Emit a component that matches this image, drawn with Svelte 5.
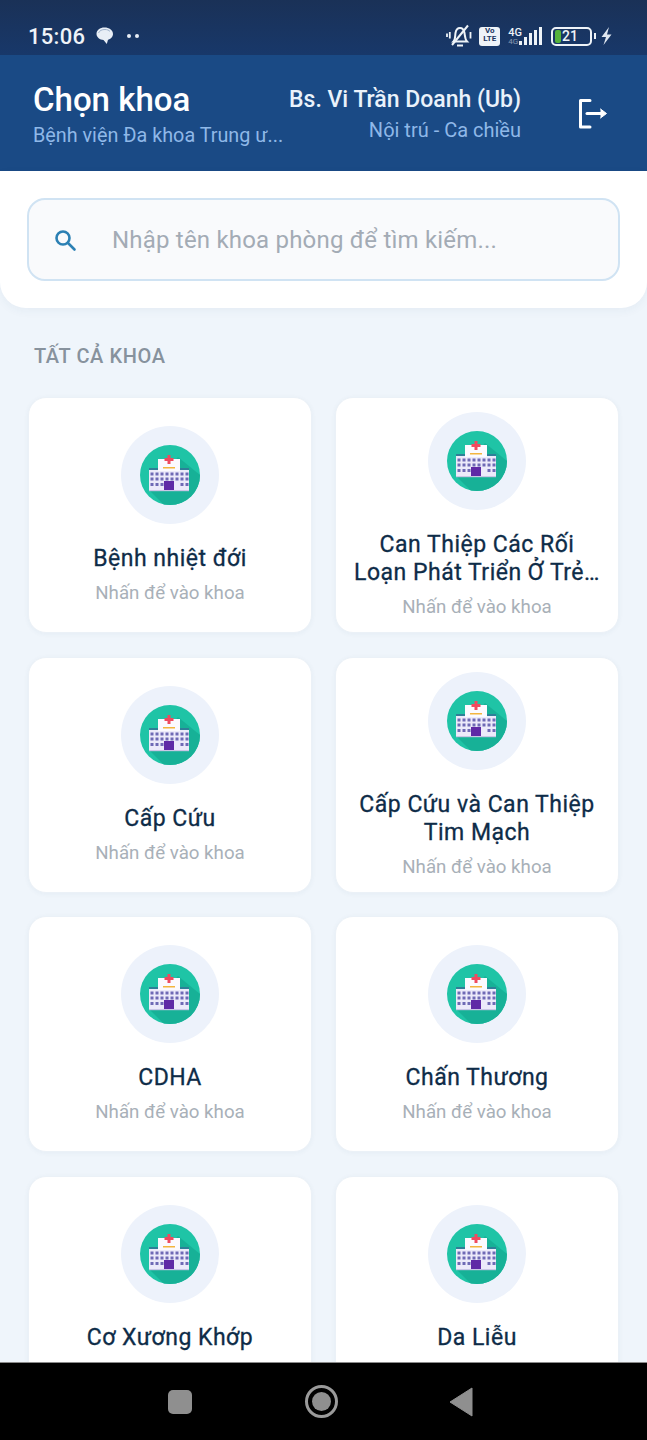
<script>
  const departments = [
    { name: "Bệnh nhiệt đới" },
    { name: "Can Thiệp Các Rối Loạn Phát Triển Ở Trẻ…" },
    { name: "Cấp Cứu" },
    { name: "Cấp Cứu và Can Thiệp Tim Mạch" },
    { name: "CDHA" },
    { name: "Chấn Thương" },
    { name: "Cơ Xương Khớp" },
    { name: "Da Liễu" }
  ];
  const columns = [10.500, 15.500, 20.500, 25.500, 30.500, 35.500, 40.500, 45.500];
  const rows = [27.500, 32.500, 38];
  // the door takes the middle of the lowest row
  const hasWindow = (x, y) => !(y === 38 && x > 22 && x < 36);
</script>

<div class="screen">
  <div class="status">
    <span class="time">15:06</span>
    <svg class="chat" width="20" height="20" viewBox="0 0 20 20">
      <path d="M9.500 1.500C14 1.500 18 4 18 8C18 11 15.500 13.200 13 13.800L11.800 18L8.500 14C5 13.700 1.500 11.500 1.500 8C1.500 4 5 1.500 9.500 1.500Z" fill="#e8eef6" />
      <path d="M3.500 7C4.500 4.500 7 3.500 10 3.500C12 3.500 14 4.200 15 5.500" fill="none" stroke="#9fb2cb" stroke-width="1" />
    </svg>
    <span class="dots"><i></i><i></i></span>
    <span class="spacer"></span>
    <svg class="bell" width="28" height="24" viewBox="0 0 28 24" fill="none" stroke="#eef3f8" stroke-width="2">
      <path d="M7.500 17.500C9.500 15.500 9 12 9.500 9C10 6 12 4 14 4C16 4 18 6 18.500 9C19 12 19 15.500 21 17.500Z" />
      <path d="M11 21.500H17" />
      <path d="M6 21L22 1.500" />
      <path d="M3.800 8V14.500M1 9.500V13M24.500 8V14.500" stroke-width="1.800" />
    </svg>
    <span class="volte">Vo<br />LTE</span>
    <span class="net"><b>4G</b><em>4G</em></span>
    <span class="bars"><i style="height: 4px"></i><i style="height: 8px"></i><i style="height: 12px"></i><i style="height: 15px"></i><i style="height: 18px"></i></span>
    <span class="battery"><i></i><b>21</b></span>
    <span class="nub"></span>
    <svg width="13" height="20" viewBox="0 0 13 20">
      <path d="M9 1L1.500 11H6L3.500 19L11.500 8.500H7Z" fill="#dfe7f1" />
    </svg>
  </div>

  <header class="topbar">
    <div class="hospital">
      <h1>Chọn khoa</h1>
      <p>Bệnh viện Đa khoa Trung ư...</p>
    </div>
    <div class="doctor">
      <h2>Bs. Vi Trần Doanh (Ub)</h2>
      <p>Nội trú - Ca chiều</p>
    </div>
    <svg class="logout" width="32" height="32" viewBox="0 0 32 32" fill="none" stroke="#fff" stroke-width="3" stroke-linecap="round" stroke-linejoin="round">
      <path d="M13 2.500H3.500V29H13" />
      <path d="M10 15.500H26" />
      <path d="M23.500 11L29.500 15.500L23.500 20" fill="#fff" stroke-width="1" />
    </svg>
  </header>

  <section class="search-wrap">
    <div class="search">
      <svg width="26" height="26" viewBox="0 0 26 26" fill="none" stroke="#2c80b4" stroke-width="2.600" stroke-linecap="round">
        <circle cx="11" cy="11" r="6.500" />
        <path d="M16 16L22.500 22.500" />
      </svg>
      <span class="placeholder">Nhập tên khoa phòng để tìm kiếm...</span>
    </div>
  </section>

  <main class="content">
    <div class="label">TẤT CẢ KHOA</div>
    <div class="grid">
      {#each departments as dept}
        <div class="card">
          <div class="halo">
            <svg width="60" height="60" viewBox="0 0 60 60">
              <defs>
                <clipPath id="disc"><circle cx="30" cy="30" r="30" /></clipPath>
              </defs>
              <circle cx="30" cy="30" r="30" fill="#1fc4a6" />
              <path d="M9 45L38 12L60 30V60H24Z" fill="#17b197" clip-path="url(#disc)" />
              <rect x="9" y="23" width="40" height="2" fill="#2e7f98" />
              <rect x="9" y="25" width="40" height="20" fill="#eceafa" />
              <rect x="18" y="14" width="22" height="12" fill="#fbfaff" />
              <path d="M27.500 10H30.500V13H33.500V16H30.500V19H27.500V16H24.500V13H27.500Z" fill="#ef4a5f" />
              <rect x="23" y="22" width="12" height="1.500" fill="#f3b53f" />
              {#each rows as y}
                {#each columns as x}
                  {#if hasWindow(x, y)}
                    <rect {x} {y} width="3" height="3" fill="#6f6ab5" />
                  {/if}
                {/each}
              {/each}
              <rect x="24" y="36" width="10" height="9" fill="#5f2aa6" />
              <rect x="9" y="45" width="40" height="1.200" fill="#c9c6e6" />
            </svg>
          </div>
          <div class="name">{dept.name}</div>
          <div class="hint">Nhấn để vào khoa</div>
        </div>
      {/each}
    </div>
  </main>

  <nav class="navbar">
    <span class="square"></span>
    <span class="circle"><i></i></span>
    <svg width="24" height="32" viewBox="0 0 24 32">
      <path d="M23 2V30L1 16Z" fill="#8f8f8f" stroke="#8f8f8f" stroke-linejoin="round" />
    </svg>
  </nav>
</div>

<style>
  :global(body) {
    margin: 0;
    background: #eff5fb;
  }

  .screen {
    width: 647px;
    height: 1440px;
    display: flex;
    flex-direction: column;
    overflow: hidden;
    font-family: Roboto, "Noto Sans", sans-serif;
    background: #eff5fb;
  }

  .status {
    height: 55px;
    flex: none;
    box-sizing: border-box;
    padding: 17px 34px 0 28px;
    display: flex;
    align-items: center;
    background: linear-gradient(#1a3157, #18386a);
    color: #eef3f8;
  }

  .time {
    font-size: 22px;
    font-weight: 500;
    letter-spacing: 0.3px;
  }

  .chat {
    margin-left: 10px;
  }

  .dots {
    display: flex;
    gap: 4px;
    margin-left: 12px;
  }

  .dots i {
    width: 4px;
    height: 4px;
    border-radius: 50%;
    background: #e8eef6;
  }

  .spacer {
    flex: 1;
  }

  .volte {
    width: 21px;
    height: 19px;
    margin-left: 5px;
    border-radius: 3px;
    background: #eef3f8;
    color: #1a3560;
    font-size: 8px;
    font-weight: 700;
    line-height: 8.500px;
    text-align: center;
  }

  .net {
    display: flex;
    flex-direction: column;
    margin-left: 8px;
    font-size: 11px;
    line-height: 11px;
  }

  .net b {
    font-weight: 500;
  }

  .net em {
    font-style: normal;
    font-size: 8px;
    line-height: 8px;
    opacity: 0.5;
  }

  .bars {
    display: flex;
    align-items: flex-end;
    gap: 2px;
    height: 18px;
    margin-left: -3px;
  }

  .bars i {
    width: 3px;
    background: #eef3f8;
  }

  .battery {
    width: 35px;
    height: 15px;
    margin-left: 9px;
    border: 2px solid #eef3f8;
    border-radius: 5px;
    display: flex;
    align-items: center;
    padding-left: 2px;
  }

  .battery i {
    width: 6px;
    height: 13px;
    border-radius: 2px;
    background: #56b33c;
  }

  .battery b {
    margin-left: 1px;
    font-size: 14px;
    font-weight: 500;
  }

  .nub {
    width: 2px;
    height: 6px;
    margin: 0 4px 0 2px;
    background: #eef3f8;
  }

  .topbar {
    height: 116px;
    flex: none;
    box-sizing: border-box;
    padding: 0 38px 0 33px;
    display: flex;
    align-items: center;
    background: #1a4a85;
  }

  .hospital {
    flex: 1;
    min-width: 0;
    padding-top: 2px;
  }

  h1 {
    margin: 0;
    color: #fff;
    font-size: 33px;
    font-weight: 500;
    line-height: 40px;
  }

  .hospital p {
    margin: 4px 0 0;
    color: #8fb8e8;
    font-size: 19.800px;
    line-height: 24px;
  }

  .doctor {
    margin-right: 56px;
    padding-top: 1px;
    text-align: right;
  }

  .doctor p {
    margin: 3px 0 0;
    color: #8fb8e8;
    font-size: 20px;
    line-height: 24px;
  }

  h2 {
    margin: 0;
    color: #eaf2fb;
    font-size: 23px;
    font-weight: 500;
    line-height: 30px;
  }

  .logout {
    margin-top: 2px;
  }

  .search-wrap {
    flex: none;
    height: 137px;
    box-sizing: border-box;
    padding: 27px 27px 0;
    background: #fff;
    border-radius: 0 0 26px 26px;
    box-shadow: 0 3px 10px rgba(30, 70, 120, 0.05);
  }

  .search {
    height: 83px;
    box-sizing: border-box;
    display: flex;
    align-items: center;
    padding-left: 23px;
    gap: 34px;
    background: #f9fafc;
    border: 2px solid #d0e3f3;
    border-radius: 18px;
  }

  .placeholder {
    color: #a3abb5;
    font-size: 24px;
    letter-spacing: 0.2px;
  }

  .content {
    flex: 1;
    min-height: 0;
    overflow: hidden;
    padding: 36px 28px 0;
  }

  .label {
    padding-left: 6px;
    color: #87929d;
    font-size: 20px;
    font-weight: 500;
    line-height: 24px;
    letter-spacing: 0.6px;
  }

  .grid {
    display: grid;
    grid-template-columns: 284px 284px;
    grid-auto-rows: 236px;
    gap: 23.670px 23px;
    margin-top: 29px;
  }

  .card {
    box-sizing: border-box;
    padding: 1px 16px 0;
    display: flex;
    flex-direction: column;
    align-items: center;
    justify-content: center;
    background: #fff;
    border: 1px solid #ebf1f7;
    border-radius: 18px;
    box-shadow: 0 1px 5px rgba(30, 70, 120, 0.05);
  }

  .halo {
    width: 98px;
    height: 98px;
    flex: none;
    display: flex;
    align-items: center;
    justify-content: center;
    border-radius: 50%;
    background: #edf2fb;
  }

  .name {
    margin-top: 21px;
    color: #0e2c48;
    font-size: 23px;
    font-weight: 400;
    line-height: 28px;
    text-align: center;
    letter-spacing: 0.5px;
    -webkit-text-stroke: 0.3px #0e2c48;
  }

  .hint {
    margin-top: 8px;
    color: #a8b0b8;
    font-size: 18.700px;
    line-height: 24px;
  }

  .navbar {
    height: 78px;
    flex: none;
    box-sizing: border-box;
    padding: 0 174px 0 168px;
    display: flex;
    align-items: center;
    justify-content: space-between;
    background: #000;
    border-top: 1px solid #8a8a8a;
  }

  .square {
    width: 24px;
    height: 24px;
    border-radius: 5px;
    background: #8f8f8f;
  }

  .circle {
    width: 33px;
    height: 33px;
    box-sizing: border-box;
    display: flex;
    align-items: center;
    justify-content: center;
    margin-left: 2px;
    border: 3px solid #9a9a9a;
    border-radius: 50%;
  }

  .circle i {
    width: 19px;
    height: 19px;
    border-radius: 50%;
    background: #8f8f8f;
  }
</style>
